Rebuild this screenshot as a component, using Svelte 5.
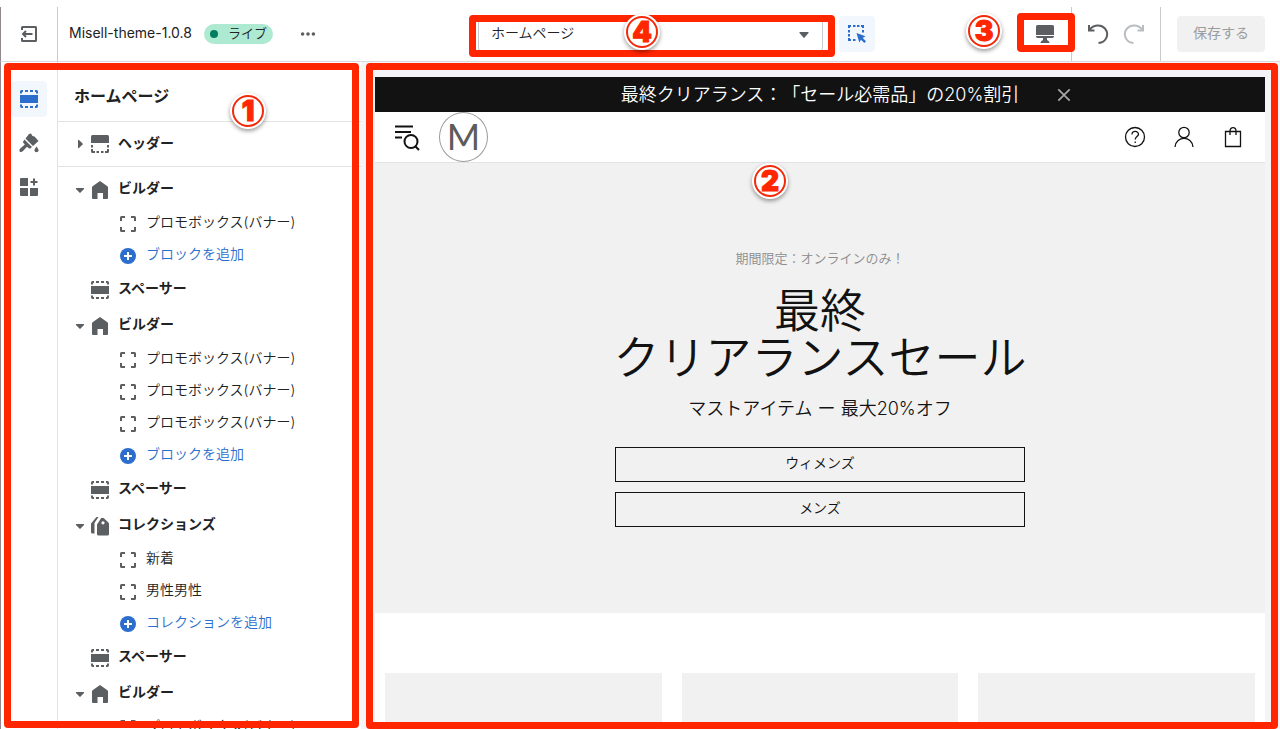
<script lang="ts">
  type Child = { label: string; add?: boolean };
  type Section = { label: string; icon: "home" | "spacer" | "tags"; children?: Child[] };

  const promo: Child = { label: "プロモボックス(バナー)" };
  const addBlock: Child = { label: "ブロックを追加", add: true };

  const sections: Section[] = [
    { label: "ビルダー", icon: "home", children: [promo, addBlock] },
    { label: "スペーサー", icon: "spacer" },
    { label: "ビルダー", icon: "home", children: [promo, promo, promo, addBlock] },
    { label: "スペーサー", icon: "spacer" },
    {
      label: "コレクションズ",
      icon: "tags",
      children: [
        { label: "新着" },
        { label: "男性男性" },
        { label: "コレクションを追加", add: true },
      ],
    },
    { label: "スペーサー", icon: "spacer" },
    { label: "ビルダー", icon: "home", children: [promo] },
  ];

  const shopLinks = ["ウィメンズ", "メンズ"];

  let template = $state("home");
</script>

{#snippet sectionIcon(name: string)}
  <svg class="icon" viewBox="0 0 20 20" aria-hidden="true">
    {#if name === "home"}
      <path d="M10 1 L17.4 6.2 Q18 6.7 18 7.5 V18 Q18 19 17 19 H13 V13 H7.5 V19 H3 Q2 19 2 18 V7.5 Q2 6.7 2.6 6.2 Z" />
    {:else if name === "tags"}
      <path d="M6.5 1 H8.5 L4.5 7 V17.5 H2.5 Q1 17.5 1 16 V7.5 Z" />
      <path fill-rule="evenodd" d="M11.2 2 H13.6 L18.4 6.6 Q19 7.2 19 8 V18 Q19 19.5 17.5 19.5 H8.5 Q7 19.5 7 18 V8.4 Z M13 5.2 A1.6 1.6 0 1 0 13 8.4 A1.6 1.6 0 1 0 13 5.2 Z" />
    {:else if name === "header"}
      <path d="M2.5 1 H17.5 Q19 1 19 2.5 V9 H1 V2.5 Q1 1 2.5 1 Z" />
      <path d="M1 11h2v2.5H1z M17 11h2v2.5h-2z M1 15h2v2h2v2H2.500Q1 19 1 17.500z M19 15h-2v2h-2v2h2.500Q19 19 19 17.500z M6.500 17h2.500v2H6.500z M11 17h2.500v2H11z" />
    {:else}
      <path d="M1 6h18v8H1z" />
      <path d="M1 4.500V3Q1 1 2.500 1H4v2H3v1.500z M6 1h3v2H6z M11 1h3v2h-3z M16 1h1.500Q19 1 19 3v1.500h-2V3h-1z" />
      <path d="M1 15.500V17Q1 19 2.500 19H4v-2H3v-1.500z M6 17h3v2H6z M11 17h3v2h-3z M16 19h1.500Q19 19 19 17v-1.500h-2V17h-1z" />
    {/if}
  </svg>
{/snippet}

<div class="editor">
  <header class="topbar">
    <button class="exit" aria-label="終了">
      <svg class="icon" viewBox="0 0 20 20" aria-hidden="true">
        <path class="line" d="M3 6V3.500Q3 3 3.500 3H16.500Q17 3 17 3.500V16.500Q17 17 16.500 17H3.500Q3 17 3 16.500V14M13.500 10H4M7 7L4 10L7 13" />
      </svg>
    </button>
    <div class="theme">
      <span class="theme-name">Misell-theme-1.0.8</span>
      <span class="live"><i></i><span>ライブ</span></span>
      <button class="more" aria-label="その他">
        <svg class="icon" viewBox="0 0 20 20" aria-hidden="true">
          <circle cx="4" cy="10" r="2" /><circle cx="10" cy="10" r="2" /><circle cx="16" cy="10" r="2" />
        </svg>
      </button>
    </div>
    <div class="picker">
      <div class="select-wrap">
        <select bind:value={template} aria-label="テンプレート">
          <option value="home">ホームページ</option>
        </select>
        <svg class="caret" viewBox="0 0 10 6" aria-hidden="true"><path d="M1 0H9Q10 0 9.500 1L5.600 5.600Q5 6 4.400 5.600L.5 1Q0 0 1 0Z" /></svg>
        <div class="frame frame-select"></div>
        <b class="mark mark-select">4</b>
      </div>
      <button class="inspect" aria-label="インスペクター">
        <svg class="icon" viewBox="0 0 20 20" aria-hidden="true">
          <path d="M1 4V1H4V3H3V4z M6 1h2.500v2H6z M10 1h2.500v2H10z M14 1h3v3h-2V3h-1z M1 6h2v2.500H1z M1 10h2v2.500H1z M1 14h2v1h1v2H1z M6 15h2.500v2H6z M15 6h2v2.500h-2z" />
          <path d="M9.500 9 L18.500 12.300 L15.700 14 L19 17.300 L17.300 19 L14 15.700 L12.300 18.500 Z" />
        </svg>
      </button>
    </div>
    <div class="device">
      <b class="mark mark-device">3</b>
      <button aria-label="デスクトップ">
        <svg class="icon" viewBox="0 0 20 20" aria-hidden="true">
          <path d="M2.500 1H17.500Q19 1 19 2.500V11H1V2.500Q1 1 2.500 1Z M1 12H19Q19 14 17.500 14H12V16Q14 16.500 14.500 18.500Q14.500 19 14 19H6Q5.500 19 5.500 18.500Q6 16.500 8 16V14H2.500Q1 14 1 12Z" />
        </svg>
      </button>
      <div class="frame frame-device"></div>
    </div>
    <div class="history">
      <button aria-label="元に戻す">
        <svg class="history-icon" viewBox="0 0 22 22" aria-hidden="true"><path class="line" d="M2 2V7.500H7.500M2.500 7C6 1.500 14 1 18 5.500C22.500 11 19.500 19.500 11.500 20" /></svg>
      </button>
      <button class="disabled" aria-label="やり直す" disabled>
        <svg class="history-icon" viewBox="0 0 22 22" aria-hidden="true"><path class="line" d="M20 2V7.500H14.500M19.500 7C16 1.500 8 1 4 5.500C-.5 11 2.500 19.500 10.500 20" /></svg>
      </button>
    </div>
    <div class="save"><button disabled>保存する</button></div>
  </header>

  <div class="body">
    <div class="left">
      <nav class="rail" aria-label="エディター">
        <button class="active" aria-label="セクション">{@render sectionIcon("spacer")}</button>
        <button aria-label="テーマ設定">
          <svg class="icon" viewBox="0 0 20 20" aria-hidden="true">
            <path d="M10 1L12 .5L13.500 3L15.500 3.500L19.500 8L14 13L6.500 5.500Z" />
            <path d="M5.500 6.500L13 14L11.500 15.300Q10.500 16 9.500 15L8 13.700L4 18Q2 19.800 .7 18.500Q-.2 17 1.500 15.300L5.800 11.500L4.500 10Q3.500 9 4.500 8Z" />
            <path d="M17.500 13.500Q19.500 16 19.500 17.300A2 2 0 0 1 15.500 17.300Q15.500 16 17.500 13.500Z" />
          </svg>
        </button>
        <button aria-label="アプリ">
          <svg class="icon" viewBox="0 0 20 20" aria-hidden="true">
            <path d="M2 1H9V9H1V2Q1 1 2 1Z M1 11H9V19H2Q1 19 1 18Z M11 11H19V18Q19 19 18 19H11Z M14 1.500h2v2.500h2.500v2H16v2.500h-2V6h-2.500V4H14z" />
          </svg>
        </button>
      </nav>

      <aside class="sidebar">
        <h1>ホームページ</h1>
        <button class="row header-row">
          <svg class="arrow" viewBox="0 0 10 10" aria-hidden="true"><path d="M3 1.500Q3 .5 4 1L7.600 4.400Q8 5 7.600 5.600L4 9Q3 9.500 3 8.500Z" /></svg>
          {@render sectionIcon("header")}
          <span>ヘッダー</span>
        </button>
        <div class="tree">
          {#each sections as section}
            <button class="row">
              <svg class="arrow" viewBox="0 0 10 10" aria-hidden="true">
                {#if section.children}
                  <path d="M1.500 3Q.5 3 1 4L4.400 7.600Q5 8 5.600 7.600L9 4Q9.500 3 8.500 3Z" />
                {/if}
              </svg>
              {@render sectionIcon(section.icon)}
              <span>{section.label}</span>
            </button>
            {#each section.children ?? [] as child}
              <button class="child" class:add={child.add}>
                <svg class="icon" viewBox="0 0 20 20" aria-hidden="true">
                  {#if child.add}
                    <circle cx="10" cy="10" r="8" />
                    <path class="plus" d="M10 6V14M6 10H14" />
                  {:else}
                    <path class="line" d="M3 7V3.500Q3 3 3.500 3H7M13 3H16.500Q17 3 17 3.500V7M17 13V16.500Q17 17 16.500 17H13M7 17H3.500Q3 17 3 16.500V13" />
                  {/if}
                </svg>
                <span>{child.label}</span>
              </button>
            {/each}
          {/each}
        </div>
      </aside>
      <div class="frame frame-left"></div>
      <b class="mark mark-left">1</b>
    </div>

    <main class="preview">
      <div class="store">
        <div class="announce">
          <p>最終クリアランス：「セール必需品」の20%割引</p>
          <button class="close" aria-label="閉じる">
            <svg viewBox="0 0 16 16" aria-hidden="true"><path d="M1.500 1.500L14.500 14.500M14.500 1.500L1.500 14.500" /></svg>
          </button>
        </div>
        <div class="store-head">
          <button class="menu" aria-label="メニュー">
            <svg viewBox="0 0 26 26" aria-hidden="true"><path d="M1 2.500H19M1 8H17M1 13.500H8M21 22L25 26" /><circle cx="17" cy="17.500" r="6.500" /></svg>
          </button>
          <a class="logo" href="#home">M</a>
          <div class="store-tools">
            <a href="#help" aria-label="ヘルプ">
              <svg viewBox="0 0 22 22" aria-hidden="true"><circle cx="11" cy="11" r="9.500" /><path d="M8 8.500C8 4.500 14.500 4.500 14.500 8.300C14.500 10.500 11.200 10.800 11.200 13.500M11.200 15.500V17" /></svg>
            </a>
            <a href="#account" aria-label="アカウント">
              <svg viewBox="0 0 22 22" aria-hidden="true"><circle cx="11" cy="6.500" r="5.200" /><path d="M2 21C3 9.500 19 9.500 20 21" /></svg>
            </a>
            <a href="#cart" aria-label="カート">
              <svg viewBox="0 0 22 22" aria-hidden="true"><path d="M3.500 5.500H18.500V20.500H3.500ZM8 9V5C8 .5 14 .5 14 5V9" /></svg>
            </a>
          </div>
        </div>
        <section class="hero">
          <p class="kicker">期間限定：オンラインのみ！</p>
          <h2>最終<br />クリアランスセール</h2>
          <p class="sub">マストアイテム ー 最大20%オフ</p>
          <div class="links">
            {#each shopLinks as link}
              <a href="#shop">{link}</a>
            {/each}
          </div>
        </section>
        <div class="cards">
          <div></div>
          <div></div>
          <div></div>
        </div>
      </div>
      <div class="frame frame-preview"></div>
      <b class="mark mark-preview">2</b>
    </main>
  </div>
</div>

<style>
  :global(body) {
    background: #fff;
  }
  .editor,
  .editor * {
    box-sizing: border-box;
  }
  .editor {
    display: flex;
    flex-direction: column;
    height: 100vh;
    padding-top: 7px;
    overflow: hidden;
    font-family: Inter, "Noto Sans CJK JP", sans-serif;
    font-size: 14px;
    line-height: 20px;
    color: #202223;
    text-spacing-trim: space-all;
  }
  button {
    display: flex;
    align-items: center;
    justify-content: center;
    padding: 0;
    border: 0;
    background: none;
    color: inherit;
    font: inherit;
  }
  a {
    color: inherit;
    text-decoration: none;
  }
  h1,
  h2,
  p {
    margin: 0;
  }
  svg {
    display: block;
    flex: none;
  }
  .icon {
    width: 20px;
    height: 20px;
    fill: #5c5f62;
  }
  .line {
    fill: none;
    stroke: #5c5f62;
    stroke-width: 2;
  }

  /* top bar */
  .topbar {
    display: flex;
    flex: none;
    height: 55px;
    border-left: 1px solid #94868f;
    border-bottom: 1px solid #d8dadc;
  }
  .exit {
    width: 57px;
    border-right: 1px solid #c9cccf;
  }
  .theme {
    display: flex;
    flex: 0 0 420px;
    align-items: center;
    padding-left: 11px;
  }
  .theme-name {
    padding-bottom: 2px;
  }
  .live {
    display: flex;
    align-items: center;
    gap: 10px;
    height: 20px;
    margin-left: 12px;
    padding: 0 6px;
    border-radius: 10px;
    background: #aee9d1;
    font-size: 13px;
    font-weight: 350;
  }
  .live span {
    padding-bottom: 2px;
  }
  .live i {
    width: 8px;
    height: 8px;
    border-radius: 50%;
    background: #007f5f;
  }
  .more {
    width: 36px;
    height: 36px;
    margin-left: 17px;
  }
  .more .icon {
    width: 18px;
  }
  .picker {
    display: flex;
    flex: 0 1 397px;
    align-items: center;
    gap: 16px;
  }
  .select-wrap {
    position: relative;
    flex: 1;
  }
  select {
    display: block;
    width: 100%;
    height: 36px;
    padding: 0 32px 3px 12px;
    border: 1px solid #c9cccf;
    border-radius: 4px;
    background: #fff;
    color: #202223;
    font: inherit;
    font-weight: 350;
    appearance: none;
  }
  .caret {
    position: absolute;
    top: 16px;
    right: 14px;
    width: 10px;
    height: 6px;
    fill: #5c5f62;
  }
  .inspect {
    width: 36px;
    height: 36px;
    border-radius: 4px;
    background: #f1f7fd;
  }
  .inspect .icon {
    fill: #2c6ecb;
  }
  .device {
    position: relative;
    display: flex;
    align-items: center;
    margin-left: auto;
    padding-right: 8px;
  }
  .device button,
  .history button {
    width: 36px;
    height: 36px;
  }
  .history {
    display: flex;
    align-items: center;
    padding: 0 8px;
    border: solid #c9cccf;
    border-width: 0 1px;
  }
  .history-icon {
    width: 22px;
    height: 22px;
  }
  .disabled .line {
    stroke: #babec3;
  }
  .save {
    display: flex;
    align-items: center;
    padding: 0 15px 0 16px;
  }
  .save button {
    width: 88px;
    height: 36px;
    padding-bottom: 3px;
    border-radius: 4px;
    background: #f1f1f1;
    color: #9a9da0;
  }

  /* left column */
  .body {
    display: flex;
    flex: 1;
    min-height: 0;
  }
  .left {
    position: relative;
    display: flex;
    flex: 0 0 361px;
    border-left: 1px solid #94868f;
  }
  .rail {
    display: flex;
    flex: 0 0 57px;
    flex-direction: column;
    align-items: center;
    gap: 8px;
    padding-top: 19px;
    border-right: 1px solid #e1e3e5;
  }
  .rail button {
    width: 36px;
    height: 36px;
    border-radius: 4px;
  }
  .rail .active {
    background: #f1f7fd;
  }
  .rail .active .icon {
    fill: #2c6ecb;
  }
  .sidebar {
    flex: 1;
    overflow: hidden;
  }
  h1 {
    padding: 24px 16px 15px;
    border-bottom: 1px solid #e1e3e5;
    font-size: 16px;
    font-weight: 600;
    line-height: 20px;
  }
  .row {
    justify-content: flex-start;
    gap: 5px;
    width: 100%;
    height: 36px;
    padding-left: 17px;
    font-weight: 600;
  }
  .row span {
    margin-left: 3px;
    padding-bottom: 2px;
  }
  .header-row {
    height: 45px;
    border-bottom: 1px solid #e1e3e5;
  }
  .arrow {
    width: 10px;
    height: 10px;
    fill: #5c5f62;
  }
  .tree {
    padding-top: 5px;
  }
  .tree span {
    padding-bottom: 4px;
  }
  .child {
    justify-content: flex-start;
    gap: 8px;
    width: 100%;
    height: 32px;
    padding-left: 60px;
    font-weight: 350;
  }
  .add {
    color: #2c6ecb;
  }
  .add .icon {
    fill: #2c6ecb;
  }
  .plus {
    fill: none;
    stroke: #fff;
    stroke-width: 2;
  }

  /* storefront preview */
  .preview {
    position: relative;
    flex: 1;
    min-width: 0;
    padding: 15px 15px 0 14px;
    background: #f5f5f9;
  }
  .store {
    height: 100%;
    overflow: hidden;
    background: #fff;
    color: #121212;
    font-weight: 350;
  }
  .announce {
    display: flex;
    align-items: center;
    justify-content: center;
    gap: 38px;
    height: 35px;
    padding-left: 52px;
    background: #121212;
    color: #fff;
    font-size: 18px;
  }
  .close svg {
    width: 14px;
    height: 14px;
    stroke: #a8a8a8;
    stroke-width: 2;
  }
  .store-head {
    display: flex;
    align-items: center;
    height: 51px;
    padding: 0 21px 0 19px;
    border-bottom: 1px solid #e3e3e3;
  }
  .menu svg {
    width: 26px;
    height: 26px;
    overflow: visible;
    fill: none;
    stroke: #121212;
    stroke-width: 2;
  }
  .logo {
    display: flex;
    align-items: center;
    justify-content: center;
    width: 49px;
    height: 50px;
    margin-left: 19px;
    padding-bottom: 2px;
    border: 1px solid #9a9a9a;
    border-radius: 50%;
    color: #5c5c5c;
    font-family: Lato, sans-serif;
    font-size: 36px;
    font-weight: 400;
  }
  .store-tools {
    display: flex;
    gap: 27px;
    margin-left: auto;
  }
  .store-tools svg {
    width: 22px;
    height: 22px;
    fill: none;
    stroke: #121212;
    stroke-width: 1.3;
  }
  .hero {
    display: flex;
    flex-direction: column;
    align-items: center;
    justify-content: center;
    height: 450px;
    background: #f1f1f1;
    text-align: center;
  }
  .kicker {
    padding-bottom: 2px;
    color: #8c8c8c;
    font-size: 13px;
    line-height: 18px;
  }
  h2 {
    margin: 18px 0 16px;
    font-size: 46px;
    font-weight: 350;
    line-height: 47px;
  }
  .sub {
    font-size: 18px;
    line-height: 24px;
  }
  .links {
    display: flex;
    flex-direction: column;
    gap: 10px;
    width: 46%;
    margin-top: 26px;
  }
  .links a {
    height: 35px;
    border: 1px solid #121212;
    line-height: 30px;
  }
  .cards {
    display: grid;
    grid-template-columns: repeat(3, 1fr);
    gap: 20px;
    padding: 60px 10px 0;
  }
  .cards div {
    height: 277px;
    background: #f1f1f1;
  }

  /* callouts laid over the editor */
  .frame {
    position: absolute;
    border: 7px solid #ff2600;
    border-radius: 4px;
    pointer-events: none;
  }
  .frame-left {
    inset: 1px 2px 1px 3px;
  }
  .frame-preview {
    inset: 1px 2px 0 5px;
  }
  .frame-select {
    inset: -1px -12px -5px -9px;
  }
  .frame-device {
    top: 6px;
    right: -4px;
    width: 58px;
    height: 39px;
  }
  .mark {
    position: absolute;
    display: flex;
    align-items: center;
    justify-content: center;
    width: 32px;
    height: 32px;
    border: 2px solid #f22a0a;
    border-radius: 50%;
    background: #fff;
    box-shadow: 0 0 0 2px #fff, 0 2px 4px 2px rgb(0 0 0 / 40%);
    color: #ff2600;
    font-size: 28px;
    font-weight: 900;
    -webkit-text-stroke: 1px #ff2600;
  }
  .mark-left {
    top: 33px;
    left: 231px;
  }
  .mark-preview {
    top: 103px;
    left: 393px;
  }
  .mark-select {
    top: 0;
    left: 148px;
  }
  .mark-device {
    top: 8px;
    right: 71px;
  }
</style>
